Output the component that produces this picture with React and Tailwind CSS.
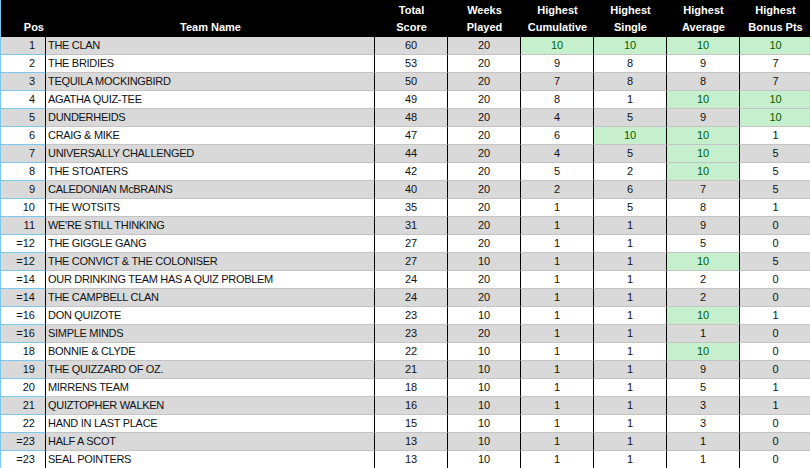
import React from "react";

const rows = [
  ["1", "THE CLAN", 60, 20, [10, true], [10, true], [10, true], [10, true]],
  ["2", "THE BRIDIES", 53, 20, [9], [8], [9], [7]],
  ["3", "TEQUILA MOCKINGBIRD", 50, 20, [7], [8], [8], [7]],
  ["4", "AGATHA QUIZ-TEE", 49, 20, [8], [1], [10, true], [10, true]],
  ["5", "DUNDERHEIDS", 48, 20, [4], [5], [9], [10, true]],
  ["6", "CRAIG & MIKE", 47, 20, [6], [10, true], [10, true], [1]],
  ["7", "UNIVERSALLY CHALLENGED", 44, 20, [4], [5], [10, true], [5]],
  ["8", "THE STOATERS", 42, 20, [5], [2], [10, true], [5]],
  ["9", "CALEDONIAN McBRAINS", 40, 20, [2], [6], [7], [5]],
  ["10", "THE WOTSITS", 35, 20, [1], [5], [8], [1]],
  ["11", "WE'RE STILL THINKING", 31, 20, [1], [1], [9], [0]],
  ["=12", "THE GIGGLE GANG", 27, 20, [1], [1], [5], [0]],
  ["=12", "THE CONVICT & THE COLONISER", 27, 10, [1], [1], [10, true], [5]],
  ["=14", "OUR DRINKING TEAM HAS A QUIZ PROBLEM", 24, 20, [1], [1], [2], [0]],
  ["=14", "THE CAMPBELL CLAN", 24, 20, [1], [1], [2], [0]],
  ["=16", "DON QUIZOTE", 23, 10, [1], [1], [10, true], [1]],
  ["=16", "SIMPLE MINDS", 23, 20, [1], [1], [1], [0]],
  ["18", "BONNIE & CLYDE", 22, 10, [1], [1], [10, true], [0]],
  ["19", "THE QUIZZARD OF OZ.", 21, 10, [1], [1], [9], [0]],
  ["20", "MIRRENS TEAM", 18, 10, [1], [1], [5], [1]],
  ["21", "QUIZTOPHER WALKEN", 16, 10, [1], [1], [3], [1]],
  ["22", "HAND IN LAST PLACE", 15, 10, [1], [1], [3], [0]],
  ["=23", "HALF A SCOT", 13, 10, [1], [1], [1], [0]],
  ["=23", "SEAL POINTERS", 13, 10, [1], [1], [1], [0]],
];

const cols = "grid grid-cols-[45px_329px_73px_73px_73px_73px_73px_71px]";

function NumCell({ value, green, bg, last }) {
  return (
    <div
      className={`h-[18px] flex items-center justify-center border-b border-b-[#c4c4c4] ${
        last ? "" : "border-r border-r-black"
      } ${green ? "bg-[#c6efce] text-[#006100]" : bg}`}>
      {value}
    </div>
  );
}

export default function App() {
  return (
    <div className="w-[810px] h-[468px] overflow-hidden bg-white border-l border-l-[#7cc7ef] font-['Liberation_Sans',Arial,sans-serif] text-[11px] text-[#111]">
      <div className={`${cols} h-[37px] bg-black text-white font-bold text-[11px] leading-[17px]`}>
        <div className="flex items-end justify-end pr-[2px] pb-[1px]">Pos</div>
        <div className="flex items-end justify-center pb-[1px]">Team Name</div>
        {[
          ["Total", "Score"],
          ["Weeks", "Played"],
          ["Highest", "Cumulative"],
          ["Highest", "Single"],
          ["Highest", "Average"],
          ["Highest", "Bonus Pts"],
        ].map(([a, b], i) => (
          <div key={i} className="flex flex-col items-center justify-end pb-[1px]">
            <span>{a}</span>
            <span>{b}</span>
          </div>
        ))}
      </div>
      {rows.map((r, i) => {
        const bg = i % 2 === 0 ? "bg-[#d9d9d9]" : "bg-white";
        return (
          <div key={i} className={`${cols} ${bg}`}>
            <div className="h-[18px] flex items-center justify-end pr-[10px] border-b border-b-[#7cc7ef] border-r border-r-black">
              {r[0]}
            </div>
            <div className="h-[18px] flex items-center pl-[2px] tracking-[-0.3px] border-b border-b-[#c4c4c4] border-r border-r-black whitespace-nowrap">
              {r[1]}
            </div>
            <NumCell value={r[2]} bg={bg} />
            <NumCell value={r[3]} bg={bg} />
            <NumCell value={r[4][0]} green={r[4][1]} bg={bg} />
            <NumCell value={r[5][0]} green={r[5][1]} bg={bg} />
            <NumCell value={r[6][0]} green={r[6][1]} bg={bg} />
            <NumCell value={r[7][0]} green={r[7][1]} bg={bg} last />
          </div>
        );
      })}
    </div>
  );
}
